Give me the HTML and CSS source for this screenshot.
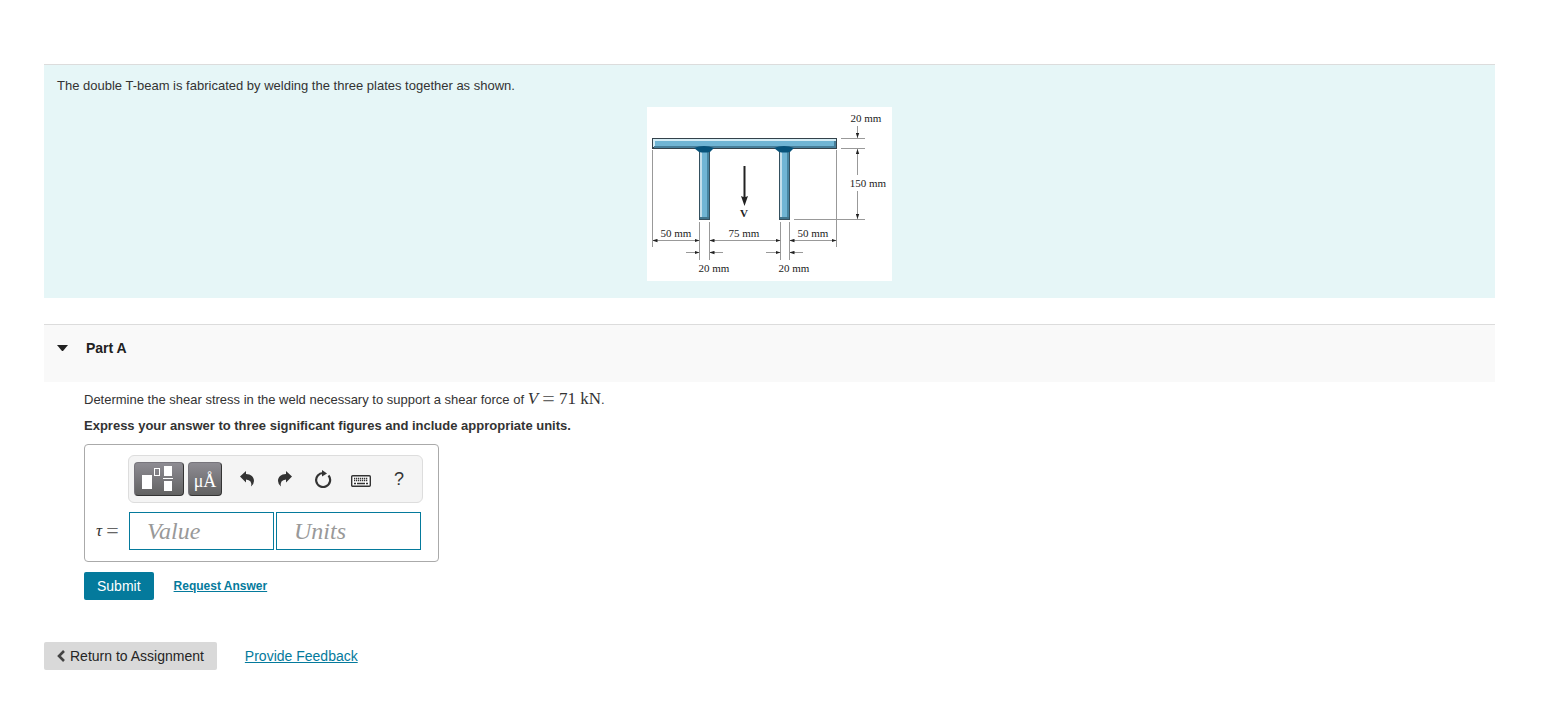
FILE: index.html
```html
<!DOCTYPE html>
<html lang="en">
<head>
  <meta charset="UTF-8">
  <meta name="viewport" content="width=device-width, initial-scale=1.0">
  <title>Part A</title>
  <link rel="stylesheet" href="styles.css">
</head>
<body>
  <main class="page">
    <!-- Problem statement -->
    <section class="problem">
      <p>The double T-beam is fabricated by welding the three plates together as shown.</p>
      <svg class="figure" width="245" height="174" viewBox="0 0 245 174" role="img" aria-label="Double T-beam">
        <defs>
          <marker id="tip" viewBox="0 0 5 4" refX="5" refY="2" markerWidth="5" markerHeight="4" markerUnits="userSpaceOnUse" orient="auto-start-reverse">
            <path d="M0 0.300 L5 2 L0 3.700 Z" fill="#222"/>
          </marker>
        </defs>
        <rect width="245" height="174" fill="#fff"/>

        <!-- Plates -->
        <g id="web">
          <rect x="52" y="42" width="11" height="71" fill="#34505f"/>
          <rect x="53" y="42" width="2" height="69" fill="#c3dfeb"/>
          <rect x="55" y="42" width="5" height="69" fill="#70b5d4"/>
          <rect x="60" y="42" width="2" height="69" fill="#4787a3"/>
          <rect x="53" y="110" width="9" height="2" fill="#40758d"/>
        </g>
        <use href="#web" x="80"/>
        <rect x="5" y="31" width="185" height="11" fill="#34424b"/>
        <rect x="6" y="32" width="183" height="2" fill="#d5edf5"/>
        <rect x="6" y="32" width="2" height="8" fill="#d5edf5"/>
        <rect x="8" y="34" width="180" height="6" fill="#70b5d4"/>
        <rect x="7" y="39" width="182" height="2" fill="#477f9a"/>
        <rect x="187" y="34" width="2" height="7" fill="#477f9a"/>

        <!-- Welds -->
        <path id="weld" d="M47 41 Q57 37 67 41 L63 45 Q57 46 52 45 Z" fill="#07537a"/>
        <use href="#weld" x="80"/>

        <!-- Extension lines -->
        <path class="line" d="M5.500 43V140 M189.500 43V140 M52.500 115V153 M62.500 115V153 M133.500 115V153 M142.500 115V153 M194 31.500H218 M194 41.500H218 M147 112.500H218"/>

        <!-- Dimension lines -->
        <g class="line">
          <path d="M5.500 133.500H52.500" marker-start="url(#tip)" marker-end="url(#tip)"/>
          <path d="M62.500 133.500H133.500" marker-start="url(#tip)" marker-end="url(#tip)"/>
          <path d="M142.500 133.500H189.500" marker-start="url(#tip)" marker-end="url(#tip)"/>
          <path d="M39 145.500H52.500" marker-end="url(#tip)"/>
          <path d="M76 145.500H62.500" marker-end="url(#tip)"/>
          <path d="M119 145.500H133.500" marker-end="url(#tip)"/>
          <path d="M156 145.500H142.500" marker-end="url(#tip)"/>
          <path d="M210.500 19V31" marker-end="url(#tip)"/>
          <path d="M210.500 68V42" marker-end="url(#tip)"/>
          <path d="M210.500 84V112" marker-end="url(#tip)"/>
        </g>

        <!-- Shear force -->
        <path d="M97.500 59V91" stroke="#222" stroke-width="2"/>
        <path d="M94 89 Q97.500 91 101 89 L97.500 99 Z" fill="#222"/>

        <g class="dims">
          <text x="219" y="15">20 mm</text>
          <text x="221" y="80">150 mm</text>
          <text x="29" y="130">50 mm</text>
          <text x="97" y="130">75 mm</text>
          <text x="166" y="130">50 mm</text>
          <text x="67" y="165">20 mm</text>
          <text x="147" y="165">20 mm</text>
          <text class="force" x="97" y="110">V</text>
        </g>
      </svg>
    </section>

    <!-- Part A -->
    <section>
      <h2 class="part-header">
        <button type="button" class="part-toggle" aria-expanded="true">
          <svg width="11" height="6" viewBox="0 0 11 6" aria-hidden="true"><path d="M0 0H11L6 6H5Z" fill="#212121"/></svg>
          Part A
        </button>
      </h2>

      <form class="part-body" onsubmit="return false">
        <p class="question">Determine the shear stress in the weld necessary to support a shear force of <span class="math"><i>V</i> <span class="eq">=</span> 71 kN</span>.</p>
        <p class="hint">Express your answer to three significant figures and include appropriate units.</p>

        <div class="answer">
          <div class="toolbar">
            <button type="button" class="key key-wide" aria-label="Templates">
              <svg width="34" height="26" viewBox="0 0 34 26" aria-hidden="true">
                <path d="M0 9H10V23H0Z M22 0H30V10H22Z M22 15H30V25H22Z M21 12H31V13H21Z" fill="#fff"/>
                <rect x="12.500" y="2.500" width="5" height="7" fill="none" stroke="#fff"/>
              </svg>
            </button>
            <button type="button" class="key key-units">μÅ</button>
            <div class="tools">
              <button type="button" class="tool" aria-label="Undo">
                <svg width="14" height="16" viewBox="0 0 14 16" aria-hidden="true"><path d="M0 5.500L6 0V3C11 3 14 6 14 10Q14 13 11 15.500Q12.500 9 6 8.500V11.500Z" fill="#333"/></svg>
              </button>
              <button type="button" class="tool" aria-label="Redo">
                <svg width="14" height="16" viewBox="0 0 14 16" aria-hidden="true"><path d="M14 5.500L8 0V3C3 3 0 6 0 10Q0 13 3 15.500Q1.500 9 8 8.500V11.500Z" fill="#333"/></svg>
              </button>
              <button type="button" class="tool" aria-label="Reset">
                <svg width="18" height="18" viewBox="0 0 18 18" aria-hidden="true"><path d="M9.500 3A7 7 0 1 0 14.500 5.500" fill="none" stroke="#333" stroke-width="2.200"/><path d="M8 0L13 3.500L8 6.500Z" fill="#333"/></svg>
              </button>
              <button type="button" class="tool tool-keyboard" aria-label="Keyboard shortcuts">
                <svg width="20" height="12" viewBox="0 0 20 12" aria-hidden="true">
                  <rect x="0.700" y="0.700" width="18.600" height="10.600" rx="1" fill="#fff" stroke="#333" stroke-width="1.400"/>
                  <path d="M3 3.500H17 M3 5.500H17" stroke="#333" stroke-width="1.300" stroke-dasharray="1.300 0.700"/>
                  <path d="M3 8.500H5 M6 8.500H14 M15 8.500H17" stroke="#333" stroke-width="1.300"/>
                </svg>
              </button>
              <button type="button" class="tool tool-help" aria-label="Help">?</button>
            </div>
          </div>
          <div class="fields">
            <label class="math tau" for="value"><i>τ</i> <span class="eq">=</span></label>
            <input id="value" class="field" type="text" placeholder="Value">
            <input class="field" type="text" placeholder="Units" aria-label="Units">
          </div>
        </div>

        <div class="actions">
          <button type="submit" class="submit">Submit</button>
          <a class="request" href="#">Request Answer</a>
        </div>
      </form>
    </section>

    <footer class="footer">
      <a class="return" href="#">
        <svg width="8" height="12" viewBox="0 0 8 12" aria-hidden="true"><path d="M7 1L2 6L7 11" fill="none" stroke="#444" stroke-width="2.600"/></svg>
        Return to Assignment
      </a>
      <a href="#">Provide Feedback</a>
    </footer>
  </main>
</body>
</html>
```
FILE: styles.css
```css
body {
  margin: 0;
  background: #fff;
  color: #333;
  font-family: "Liberation Sans", Arial, sans-serif;
  font-size: 13px;
  line-height: 18px;
}
p,
h2 {
  margin: 0;
}
a {
  color: #047a9c;
}
button,
input {
  box-sizing: border-box;
  margin: 0;
  padding: 0;
  font-family: inherit;
}
button {
  border: 0;
  background: none;
  cursor: pointer;
}
.page {
  padding: 64px 47px 46px 44px;
}

/* Problem statement */
.problem {
  padding: 12px 13px 17px;
  margin-bottom: 26px;
  border-top: 1px solid #dcdcdc;
  background: #e6f6f7;
}
.figure {
  display: block;
  margin: 12px auto 0;
}
.line {
  fill: none;
  stroke: #999;
}
.dims {
  font-family: "Liberation Serif", "Times New Roman", serif;
  font-size: 11px;
  text-anchor: middle;
  fill: #222;
}
.force {
  font-weight: bold;
}

/* Part A */
.part-header {
  padding: 12px 13px 23px;
  border-top: 1px solid #dcdcdc;
  background: #f9f9f9;
}
.part-toggle {
  display: flex;
  align-items: center;
  gap: 18px;
  color: #212121;
  font-size: 14px;
  font-weight: bold;
  line-height: 22px;
}
.part-body {
  padding: 5px 40px 0;
}
.question,
.hint {
  line-height: 24px;
}
.hint {
  margin: 2px 0 6px;
  font-weight: bold;
}
.math {
  font-family: "Liberation Serif", "Times New Roman", serif;
  font-size: 17px;
}
.eq {
  color: #666;
  font-size: 22px;
  line-height: 1px;
  vertical-align: -2px;
}

/* Answer box */
.answer {
  box-sizing: border-box;
  width: fit-content;
  padding: 10px 15px 11px 11px;
  border: 1px solid #aaa;
  border-radius: 4px;
}
.toolbar {
  display: flex;
  align-items: center;
  gap: 4px;
  margin-left: 32px;
  padding: 6px 5px;
  border: 1px solid #ddd;
  border-radius: 6px;
  background: #f4f4f4;
}
.key {
  display: flex;
  align-items: center;
  justify-content: center;
  width: 34px;
  height: 34px;
  border: 1px solid #333;
  border-top-color: #77757c;
  border-left-color: #77757c;
  border-radius: 4px;
  background: linear-gradient(#8e8c93, #626262);
  color: #fff;
}
.key-wide {
  width: 50px;
}
.key-units {
  padding-top: 4px;
  font-family: "Liberation Serif", "Times New Roman", serif;
  font-size: 18px;
}
.tools {
  display: flex;
  flex: 1;
  justify-content: flex-end;
  gap: 4px;
  padding-right: 1px;
}
.tool {
  display: flex;
  align-items: center;
  justify-content: center;
  width: 34px;
  height: 34px;
  color: #333;
}
.tool-keyboard {
  padding-top: 4px;
}
.tool-help {
  font-size: 18px;
}
.fields {
  display: flex;
  align-items: center;
  gap: 2px;
  margin-top: 9px;
  padding-right: 2px;
}
.tau {
  width: 31px;
  white-space: nowrap;
}
.field {
  width: 145px;
  height: 38px;
  padding: 0 17px;
  border: 1px solid #047a9c;
  background: #fff;
  color: #333;
  font-family: "Liberation Serif", "Times New Roman", serif;
  font-size: 24px;
}
.field::placeholder {
  color: #999;
  font-style: italic;
  opacity: 1;
}

/* Actions */
.actions {
  display: flex;
  align-items: center;
  gap: 20px;
  margin-top: 10px;
}
.submit {
  height: 28px;
  padding: 0 13px;
  border-radius: 2px;
  background: #047a9c;
  color: #fff;
  font-size: 14px;
}
.request {
  font-size: 12px;
  font-weight: bold;
}
.footer {
  display: flex;
  align-items: center;
  gap: 28px;
  margin-top: 42px;
  font-size: 14px;
}
.return {
  display: flex;
  align-items: center;
  gap: 5px;
  padding: 5px 13px;
  border-radius: 2px;
  background: #d9d9d9;
  color: #252525;
  text-decoration: none;
}
```
